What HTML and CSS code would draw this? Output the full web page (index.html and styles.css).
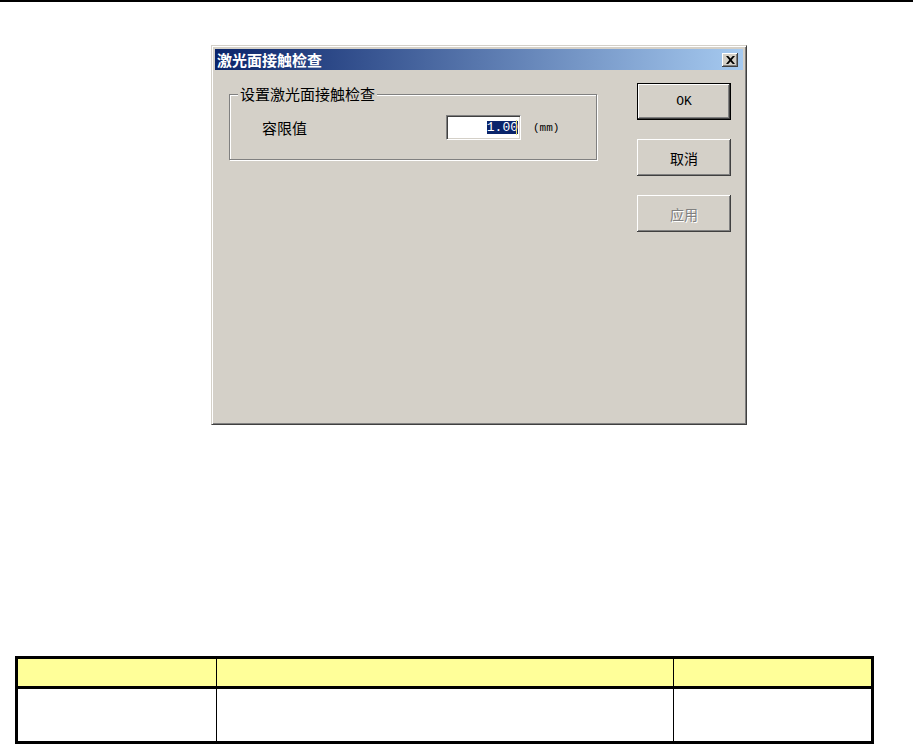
FILE: index.html
```html
<!DOCTYPE html>
<html lang="zh-CN">
<head>
<meta charset="utf-8">
<title>激光面接触检查</title>
<link rel="stylesheet" href="styles.css">
</head>
<body>
<div class="rule"></div>
<div class="dialog">
  <div class="titlebar">
    <span class="title">激光面接触检查</span>
    <span class="close"><svg width="9" height="8" viewBox="0 0 9 8"><path d="M0 0h2.2l2.3 2.5L6.8 0H9L5.7 4 9 8H6.8L4.5 5.5 2.2 8H0l3.3-4z" fill="#000"/></svg></span>
  </div>
  <div class="body">
    <div class="group">
      <span class="legend">设置激光面接触检查</span>
      <div class="row">
        <span class="lbl">容限值</span>
        <div class="input"><span class="sel">1.00</span><span class="caret"></span></div>
        <span class="unit">(mm)</span>
      </div>
    </div>
    <div class="buttons">
      <div class="btn default">OK</div>
      <div class="btn cjk">取消</div>
      <div class="btn cjk disabled">应用</div>
    </div>
  </div>
</div>
<div class="tbl">
  <div class="cell head"></div>
  <div class="cell head sep"></div>
  <div class="cell head sep"></div>
  <div class="cell"></div>
  <div class="cell sep"></div>
  <div class="cell sep"></div>
</div>
</body>
</html>
```

FILE: styles.css
```css
body {
  margin: 0;
  background: #fff;
  font-family: "Noto Sans CJK SC", "Noto Sans", sans-serif;
  color: #000;
}
.rule {
  height: 2px;
  background: #000;
}
.dialog {
  margin: 43px 0 0 211px;
  width: 536px;
  height: 380px;
  box-sizing: border-box;
  background: #d4d0c8;
  border: 1px solid;
  border-color: #d4d0c8 #404040 #404040 #d4d0c8;
  box-shadow: inset 1px 1px #fff, inset -1px -1px #808080;
  padding: 3px;
  display: flex;
  flex-direction: column;
}
.titlebar {
  height: 21px;
  flex: none;
  background: linear-gradient(90deg, #0a246a, #a6caf0);
  display: flex;
  align-items: center;
  padding: 0 5px 0 2px;
}
.title {
  flex: 1;
  color: #fff;
  font-weight: bold;
  font-size: 15px;
  line-height: 21px;
}
.close {
  width: 16px;
  height: 14px;
  background: #d4d0c8;
  box-shadow: inset -1px -1px #404040, inset 1px 1px #fff, inset -2px -2px #808080;
  display: flex;
  align-items: center;
  justify-content: center;
}
.body {
  display: flex;
  padding: 13px 12px 0 14px;
}
.group {
  position: relative;
  width: 368px;
  height: 66px;
  margin-top: 11px;
  box-sizing: border-box;
  border: 1px solid #808080;
  box-shadow: inset 1px 1px #fff, 1px 1px #fff;
  padding: 20px 0 0 32px;
}
.legend {
  position: absolute;
  left: 8px;
  top: -10px;
  padding: 0 2px;
  background: #d4d0c8;
  font-size: 15px;
  line-height: 18px;
}
.row {
  display: flex;
  align-items: center;
  height: 25px;
}
.lbl {
  width: 184px;
  font-size: 15px;
}
.input {
  position: relative;
  width: 75px;
  height: 25px;
  box-sizing: border-box;
  background: #fff;
  border: 1px solid;
  border-color: #808080 #fff #fff #808080;
  box-shadow: inset 1px 1px #404040, inset -1px -1px #d4d0c8;
  display: flex;
  align-items: center;
  justify-content: flex-end;
  padding-right: 2px;
}
.sel {
  background: #0a246a;
  color: #fff;
  font-family: "Liberation Mono", monospace;
  font-size: 13px;
  line-height: 13px;
  height: 13px;
}
.caret {
  position: absolute;
  right: 3px;
  top: 4px;
  width: 1px;
  height: 15px;
  background: #e8e070;
}
.unit {
  margin-left: 12px;
  font-family: "Liberation Mono", monospace;
  font-size: 11px;
}
.buttons {
  margin-left: auto;
  display: flex;
  flex-direction: column;
  gap: 19px;
}
.btn {
  width: 94px;
  height: 37px;
  box-sizing: border-box;
  background: #d4d0c8;
  display: flex;
  align-items: center;
  justify-content: center;
  box-shadow: inset -1px -1px #404040, inset 1px 1px #fff, inset -2px -2px #808080;
  font-family: "Liberation Mono", monospace;
  font-size: 13px;
}
.btn.default {
  border: 1px solid #000;
}
.btn.cjk {
  font-family: "Noto Sans CJK SC", sans-serif;
  font-size: 14px;
}
.btn.disabled {
  color: #808080;
  text-shadow: 1px 1px #fff;
}
.tbl {
  margin: 231px 0 0 15px;
  width: 859px;
  box-sizing: border-box;
  border: 3px solid #000;
  display: grid;
  grid-template-columns: 198px 457px 198px;
  grid-template-rows: 30px 52px;
}
.cell {
  box-sizing: border-box;
  background: #fff;
}
.cell.head {
  background: #ffff99;
  border-bottom: 3px solid #000;
}
.cell.sep {
  border-left: 1px solid #000;
}
```
